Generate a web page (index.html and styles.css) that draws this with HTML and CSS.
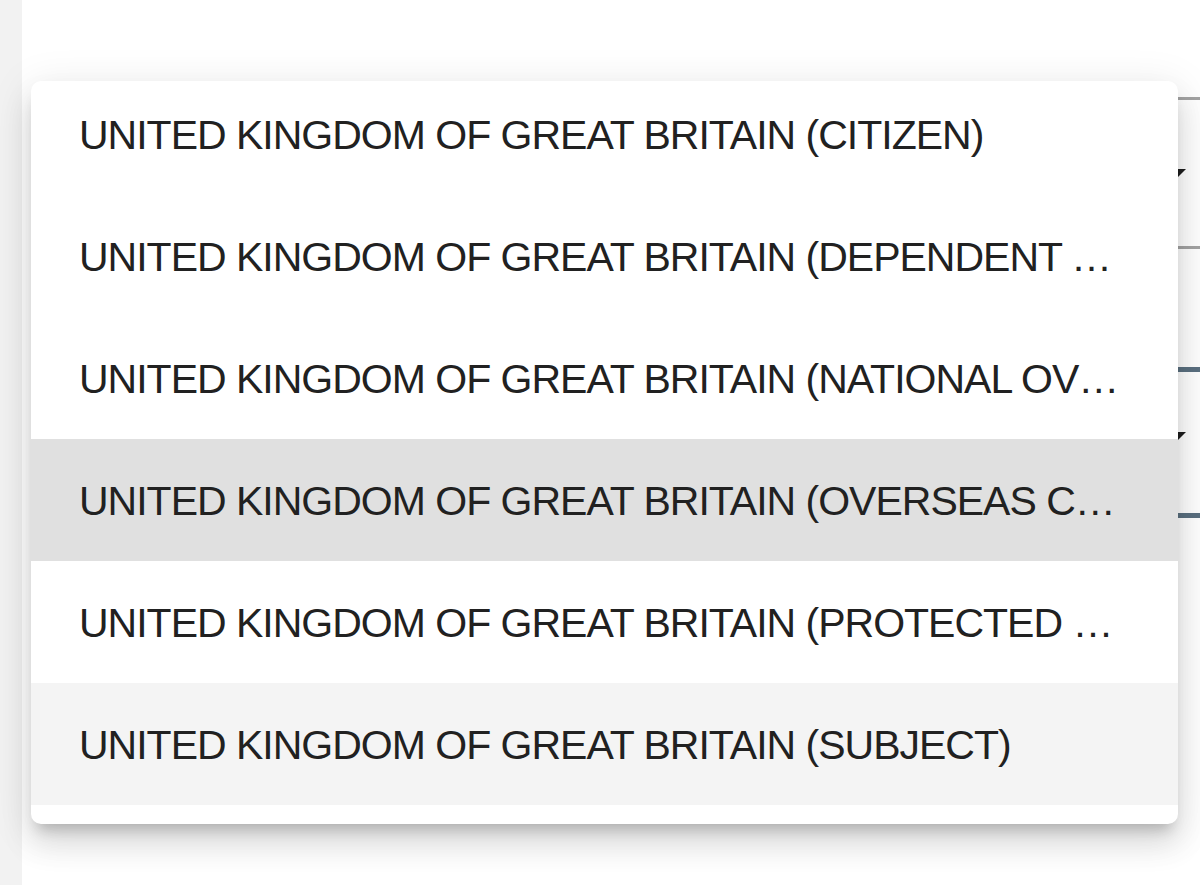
FILE: index.html
```html
<!DOCTYPE html>
<html lang="en">
<head>
    <meta charset="UTF-8">
    <meta name="viewport" content="width=device-width, initial-scale=1.0">
    <title>Nationality</title>
    <link rel="stylesheet" href="styles.css">
</head>
<body>

    <div class="page">
        <div class="sidebar"></div>

        <div class="form">
            <!-- select fields behind the open panel -->
            <div class="field field-idle">
                <span class="arrow"></span>
            </div>
            <div class="field field-focused">
                <span class="arrow"></span>
            </div>
        </div>
    </div>

    <!-- open select panel -->
    <div class="panel">
        <ul class="options">
            <li class="option">UNITED KINGDOM OF GREAT BRITAIN (CITIZEN)</li>
            <li class="option">UNITED KINGDOM OF GREAT BRITAIN (DEPENDENT TERRITORIES CITIZEN)</li>
            <li class="option">UNITED KINGDOM OF GREAT BRITAIN (NATIONAL OVERSEAS)</li>
            <li class="option option-active">UNITED KINGDOM OF GREAT BRITAIN (OVERSEAS CITIZEN)</li>
            <li class="option">UNITED KINGDOM OF GREAT BRITAIN (PROTECTED PERSON)</li>
            <li class="option option-hover">UNITED KINGDOM OF GREAT BRITAIN (SUBJECT)</li>
        </ul>
    </div>

</body>
</html>
```

FILE: styles.css
```css
html, body {
    margin: 0;
    height: 100%;
}
body {
    font-family: "Liberation Sans", Arial, sans-serif;
    background-color: #ffffff;
    overflow: hidden;
}
.page {
    display: flex;
    height: 100%;
}
.sidebar {
    width: 22px;
    flex-shrink: 0;
    background-color: #f2f2f2;
}
.form {
    flex: 1;
    padding-top: 97px;
    margin-right: -40px; /* fields run past the window edge */
    display: flex;
    flex-direction: column;
    gap: 118px;
}
.field {
    display: flex;
    align-items: center;
    justify-content: flex-end;
    padding-right: 54px;
    margin-left: 40px;
}
.field-idle {
    height: 146px;
    border-top: 3px solid #a3a3a3;
    border-bottom: 3px solid #a3a3a3;
}
.field-focused {
    height: 141px;
    border-top: 5px solid #5b7080;
    border-bottom: 5px solid #5b7080;
}
.field-focused .arrow {
    margin-top: -12px;
}
.arrow {
    width: 0;
    height: 0;
    border-left: 9px solid transparent;
    border-right: 9px solid transparent;
    border-top: 9px solid #1f1f1f;
}

/* panel */
.panel {
    position: absolute;
    left: 31px;
    top: 81px;
    width: 1147px;
    height: 743px;
    background-color: #ffffff;
    border-radius: 10px;
    overflow: hidden;
    box-shadow: 0 12px 14px -7px rgba(0, 0, 0, 0.2),
                0 20px 30px 2px rgba(0, 0, 0, 0.1),
                0 7px 40px 5px rgba(0, 0, 0, 0.08);
}
.options {
    list-style: none;
    margin: -8px 0 0 0; /* list scrolled a little */
    padding: 0;
}
.option {
    height: 122px;
    line-height: 124px;
    padding: 0 52px 0 48px;
    font-size: 41px;
    letter-spacing: -1px;
    color: #212121;
    white-space: nowrap;
    overflow: hidden;
    text-overflow: ellipsis;
}
.option-active {
    background-color: #e0e0e0;
}
.option-hover {
    background-color: #f4f4f4;
}
```
